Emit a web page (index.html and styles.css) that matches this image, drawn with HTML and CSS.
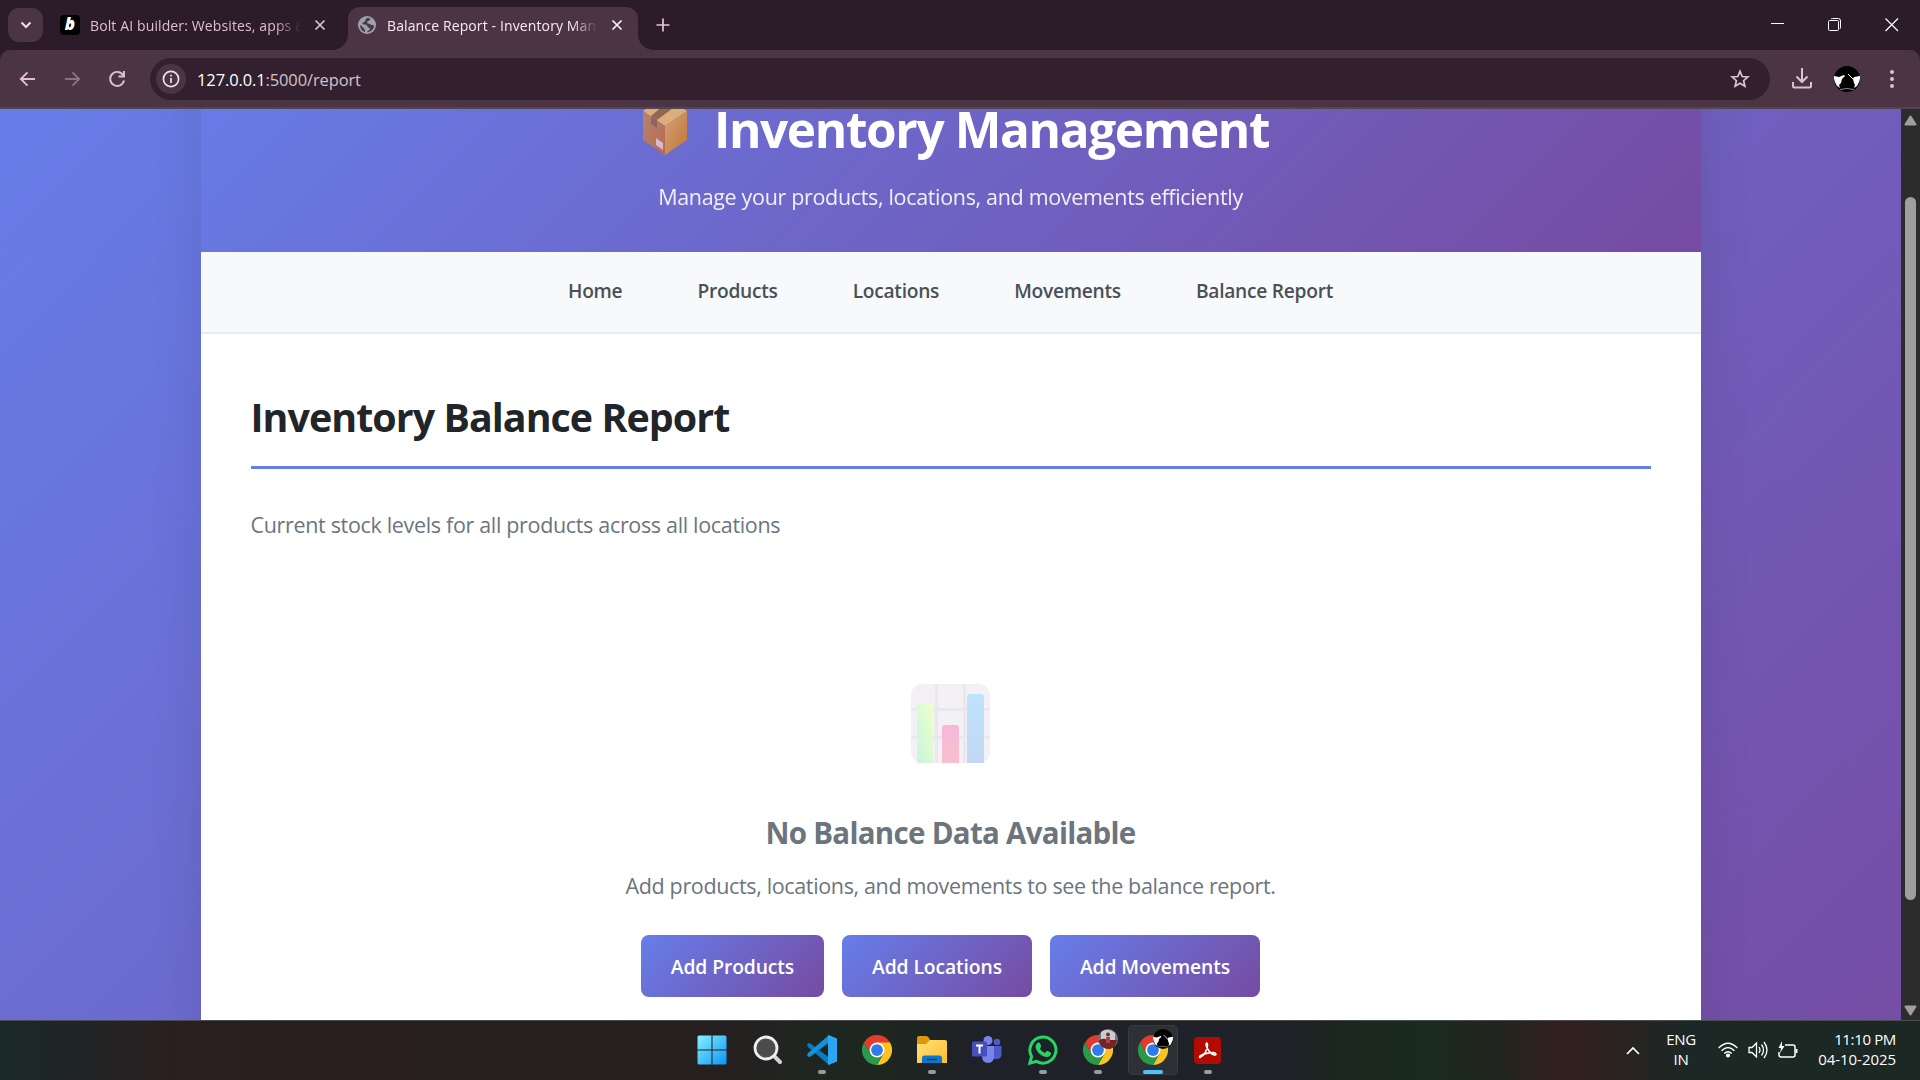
FILE: index.html
```html
<!DOCTYPE html>
<html lang="en">
<head>
<meta charset="utf-8">
<title>Balance Report - Inventory Management</title>
<link rel="stylesheet" href="styles.css">
</head>
<body>
<svg width="0" height="0" class="defs" aria-hidden="true">
  <defs>
    <linearGradient id="win" x1="0" y1="0" x2="1" y2="1"><stop offset="0" stop-color="#84f2ff"/><stop offset="1" stop-color="#0b94f5"/></linearGradient>
    <linearGradient id="folder" x1="0" y1="0" x2="1" y2="1"><stop offset="0" stop-color="#ffe07a"/><stop offset="1" stop-color="#fbc02a"/></linearGradient>
    <linearGradient id="green" x1="1" y1="0" x2="0" y2="1"><stop offset="0" stop-color="#efffcb"/><stop offset="1" stop-color="#c6f5de"/></linearGradient>
    <linearGradient id="pink" x1="0" y1="0" x2="0" y2="1"><stop offset="0" stop-color="#f5b8d8"/><stop offset="1" stop-color="#f8c0cd"/></linearGradient>
    <linearGradient id="blue" x1="0" y1="0" x2="0" y2="1"><stop offset="0" stop-color="#bde4ff"/><stop offset="1" stop-color="#c3d7f1"/></linearGradient>
    <linearGradient id="boxl" x1="0" y1="0" x2="1" y2="1"><stop offset="0" stop-color="#b68370"/><stop offset="1" stop-color="#b76b50"/></linearGradient>
    <linearGradient id="boxr" x1="0" y1="0" x2="1" y2="1"><stop offset="0" stop-color="#d99f78"/><stop offset="1" stop-color="#bd7836"/></linearGradient>
    <symbol id="chrome" viewBox="0 0 48 48">
      <path fill="#e33b2e" d="M24 24 3.2 12A24 24 0 0 1 44.8 12Z"/>
      <path fill="#fcc31e" d="M24 12H44.8A24 24 0 0 1 24 48L34.4 30Z"/>
      <path fill="#2a9a48" d="M34.4 30 24 48A24 24 0 0 1 3.2 12L13.6 30Z"/>
      <path fill="#e33b2e" d="M3.2 12 13.6 30 24 24V12Z"/>
      <circle cx="24" cy="24" r="12" fill="#fff"/><circle cx="24" cy="24" r="9.4" fill="#2f7bea"/>
    </symbol>
    <symbol id="avatar" viewBox="0 0 26 26">
      <circle cx="13" cy="13" r="13" fill="#000"/>
      <path fill="#fff" d="M0 10 5 11 10 9 11 10 8 13 7 17 5 19 6 22 3 20Q-.5 15 0 10ZM26 10 20 11 19 13 20 17 21 19 20 22 23 20Q26.500 15 26 10Z"/>
      <path fill="none" stroke="#aaa" stroke-width=".8" d="M6 23.500Q13 21.500 20 23.500"/>
      <path fill="none" stroke="#fff" stroke-width="1" d="M14 8 20 14"/>
    </symbol>
  </defs>
</svg>

<div class="screen">
  <div class="tabstrip">
    <div class="tab-search"><svg width="12" height="8" viewBox="0 0 12 8"><path d="M1.500 1.500 6 6 10.500 1.500" fill="none" stroke="#f0dfe9" stroke-width="2"/></svg></div>
    <div class="tab tab-idle">
      <span class="bolt">b</span>
      <span class="tab-title">Bolt AI builder: Websites, apps &amp;</span>
      <svg class="tab-close" width="12" height="12" viewBox="0 0 12 12"><path d="m1.500 1.500 9 9m0-9-9 9" stroke="#e2bfd4" stroke-width="1.700"/></svg>
    </div>
    <div class="tab tab-active">
      <svg class="globe" width="18" height="18" viewBox="0 0 18 18"><circle cx="9" cy="9" r="9" fill="#9aa3ad"/><path fill="#4b3544" d="M10 2C7 2.300 8 4 7 5.500 5.500 6.200 4.300 6.500 4.500 8 6 9 9 8 9.500 10.500 10 12 12 11.500 12 13 11.500 14.500 9.500 14.500 9 16.200 13 16 16 13 16 9.500 14.500 8.500 13 9.500 12 8 10.500 7.500 9 7.500 9 6 9.500 4.500 12 5 12.500 3 11.800 2.300 11 2 10 2ZM2 9C2 12.500 4 15 7 16 7.500 14.500 6.500 13.500 6 12.500 5 11.500 4 10 2 9Z"/></svg>
      <span class="tab-title">Balance Report - Inventory Man</span>
      <svg class="tab-close" width="12" height="12" viewBox="0 0 12 12"><path d="m1.500 1.500 9 9m0-9-9 9" stroke="#fff0f8" stroke-width="1.700"/></svg>
    </div>
    <svg class="newtab" width="14" height="14" viewBox="0 0 14 14"><path d="M7 .5v13M.5 7h13" stroke="#e6c6da" stroke-width="1.700"/></svg>
    <div class="winctl">
      <svg width="14" height="14" viewBox="0 0 14 14"><path d="M0 5.500h13" stroke="#fff"/></svg>
      <svg width="14" height="14" viewBox="0 0 14 14" fill="none" stroke="#fff"><rect x=".5" y="2.500" width="10" height="10" rx="1"/><path d="M3 1Q3.500.5 4.500.5h6Q12.500.5 12.500 3v6.500q0 1-.8 1.500"/></svg>
      <svg width="14" height="14" viewBox="0 0 14 14"><path d="m.5.500 12.500 12.500m0-12.500-12.500 12.500" stroke="#fff" stroke-width="1.200"/></svg>
    </div>
  </div>

  <div class="toolbar">
    <svg width="18" height="18" viewBox="0 0 18 18" fill="none" stroke="#e0bfd3" stroke-width="1.900"><path d="M17 9H3M9.500 2.300 2.800 9 9.500 15.700"/></svg>
    <svg width="18" height="18" viewBox="0 0 18 18" fill="none" stroke="#8a7081" stroke-width="1.900"><path d="M2 9h14M9.500 2.300 16.200 9 9.500 15.700"/></svg>
    <svg width="18" height="18" viewBox="0 0 18 18" fill="none" stroke="#e0bfd3" stroke-width="1.900"><path d="M15.300 5.500A7 7 0 1 0 16 10.500M16 1v5.500h-5.500"/></svg>
    <div class="omnibox">
      <span class="siteinfo"><svg width="18" height="18" viewBox="0 0 18 18"><circle cx="9" cy="9" r="7.600" fill="none" stroke="#f0dfe9" stroke-width="1.700"/><path d="M9 8v5M9 4.800v1.700" stroke="#f0dfe9" stroke-width="1.700"/></svg></span>
      <span class="url">127.0.0.1<i>:5000/report</i></span>
      <svg class="star" width="20" height="20" viewBox="0 0 20 20"><path d="m10 2.300 2.200 5.200 5.700.5-4.300 3.700 1.300 5.500-4.900-2.900-4.900 2.900 1.300-5.500L2.100 8l5.700-.5Z" fill="none" stroke="#dcc5d2" stroke-width="1.700"/></svg>
    </div>
    <svg class="download" width="20" height="21" viewBox="0 0 20 21" fill="none" stroke="#e0bfd3" stroke-width="2"><path d="M10 0v13.500M4.500 8.500l5.500 5.500 5.500-5.500M1 14v4q0 1.500 1.500 1.500h15q1.500 0 1.500-1.500v-4"/></svg>
    <svg class="profile" width="26" height="26"><use href="#avatar"/></svg>
    <svg width="4" height="18" viewBox="0 0 4 18" fill="#e0bfd3"><circle cx="2" cy="2" r="2"/><circle cx="2" cy="9" r="2"/><circle cx="2" cy="16" r="2"/></svg>
  </div>

  <div class="viewport">
    <div class="page">
      <div class="container">
        <header class="header">
          <h1><svg width="44" height="58" viewBox="0 0 44 58"><path fill="#dcae7e" d="M22 0 44 14 22 29 0 14Z"/><path fill="url(#boxl)" d="M0 14 22 29V58L0 43Z"/><path fill="url(#boxr)" d="M44 14 22 29V58L44 43Z"/><path fill="#94664f" d="M27 3 34 8 14 23 8 19Z"/><path fill="#8b6560" d="m8 19 6 4v8l-6-4Z"/><path fill="#d8bad2" d="m13 41 7 5v7l-7-5Z"/></svg><span>Inventory Management</span></h1>
          <p>Manage your products, locations, and movements efficiently</p>
        </header>
        <nav class="nav"><a>Home</a><a>Products</a><a>Locations</a><a>Movements</a><a>Balance Report</a></nav>
        <main class="main">
          <h2>Inventory Balance Report</h2>
          <p class="lead">Current stock levels for all products across all locations</p>
          <section class="empty">
            <svg width="79" height="79" viewBox="0 0 79 79"><rect width="79" height="79" rx="11" fill="#f3f1f6"/><path d="M25.500 0v79M53.500 0v79M0 25.500h79M0 53.500h79" stroke="#e9e8ec" stroke-width="3"/><path fill="url(#green)" d="M6 79V22q0-3 3-3h10q3 0 3 3v57Z"/><path fill="url(#pink)" d="M31 79V44q0-3 3-3h11q3 0 3 3v35Z"/><path fill="url(#blue)" d="M56 79V13q0-3 3-3h11q3 0 3 3v66Z"/></svg>
            <h3>No Balance Data Available</h3>
            <p>Add products, locations, and movements to see the balance report.</p>
            <div class="actions"><a class="btn b1">Add Products</a><a class="btn b2">Add Locations</a><a class="btn b3">Add Movements</a></div>
          </section>
        </main>
      </div>
    </div>
    <div class="scrollbar">
      <svg width="13" height="11" viewBox="0 0 13 11"><path d="M6.500 1.500 11.500 9.500H1.500Z" fill="#9f9f9f" stroke="#9f9f9f" stroke-width="2" stroke-linejoin="round"/></svg>
      <div class="thumb"></div>
      <svg width="13" height="11" viewBox="0 0 13 11"><path d="M6.500 9.500 11.500 1.500H1.500Z" fill="#9f9f9f" stroke="#9f9f9f" stroke-width="2" stroke-linejoin="round"/></svg>
    </div>
  </div>

  <div class="taskbar">
    <div class="side start"></div>
    <div class="apps">
      <div class="app"><svg width="30" height="30" viewBox="0 0 30 30"><path fill="url(#win)" d="M2 .5h12.500v14H.5V2Q.5.5 2 .5ZM15.500.5H28q1.500 0 1.500 1.500v12.500h-14ZM.5 15.500h14v14H2Q.5 29.500.5 28ZM15.500 15.500h14V28q0 1.500-1.500 1.500H15.500Z"/></svg></div>
      <div class="app"><svg width="30" height="30" viewBox="0 0 30 30"><path d="m22 21 6 6" stroke="#cfd2d8" stroke-width="4" stroke-linecap="round"/><circle cx="14" cy="13" r="11" fill="#4c4c4c" stroke="#eeeef0" stroke-width="2.800"/></svg></div>
      <div class="app run"><svg width="30" height="30" viewBox="0 0 30 30"><path fill="#0a7bc4" d="M0 9.500 2.500 7.800 22 22.500V30L1 12Z"/><path fill="#1490dd" d="M0 20.500 2.500 22.200 22 7.500V0L1 18Z"/><path fill="#2ba7f2" d="M21.500 0 30 3.500v23L21.500 30 21 29V1Z"/></svg></div>
      <div class="app"><svg width="30" height="30"><use href="#chrome"/></svg></div>
      <div class="app run"><svg width="30" height="28" viewBox="0 0 30 28"><path fill="#dd9a08" d="M0 2Q0 0 2 0h7q2 0 3 2l1 2v6H0Z"/><path fill="url(#folder)" d="M0 8h9l4-4h15q2 0 2 2v21H0Z"/><path fill="#1077c8" d="M5 27v-5q0-2.500 2.500-2.500h15Q25 19.500 25 22v5Z"/><path d="M10 23.500h10" stroke="#06437d" stroke-width="1.500"/></svg></div>
      <div class="app"><svg width="30" height="28" viewBox="0 0 30 28"><circle cx="25" cy="6" r="3.300" fill="#5059c9"/><path fill="#5059c9" d="M20 10h9.500v8q0 5-5 5H20Z"/><circle cx="16" cy="4.500" r="4.500" fill="#7b83eb"/><path fill="#7b83eb" d="M10 10h12v10q0 7-6 7t-6-7Z"/><rect y="5.500" width="15" height="15" rx="1.500" fill="#4650bd"/><path d="M4 9.500h7M7.500 9.500v8" stroke="#fff" stroke-width="2"/></svg></div>
      <div class="app run"><svg width="30" height="30" viewBox="0 0 30 30"><path d="M1.800 28.200 3.600 21.500A13 13 0 1 1 8.500 26.400Z" fill="none" stroke="#28d366" stroke-width="3"/><path fill="#28d366" d="M9.500 8q1.500-1 2.500.2l1.200 3q0 1-1.400 2.200 1.800 3.200 5 4.700l1.500-1.700q.7-.7 1.400-.3l3 1.500q.8.500 0 2.200-1.500 2.700-4.700 2.200Q11 20.500 8 14 6.800 10 9.500 8Z"/></svg></div>
      <div class="app run"><svg width="30" height="30"><use href="#chrome"/></svg><svg class="badge" width="20" height="20" viewBox="0 0 20 20"><circle cx="10" cy="10" r="10" fill="#77747a"/><path fill="#cfcacb" d="M3 3Q10-2 17 4V11H3Z"/><path fill="#742326" d="M.5 12Q5 8 9 11l10 0Q18 18 12 20 3 20 .5 12Z"/><path fill="#b0433f" d="M8 8h4v6H8Z"/><circle cx="10" cy="5.500" r="2" fill="#5d3937"/></svg></div>
      <div class="app run active"><svg width="30" height="30"><use href="#chrome"/></svg><svg class="badge" width="20" height="20"><use href="#avatar"/></svg></div>
      <div class="app run"><svg width="27" height="27" viewBox="0 0 27 27"><rect width="27" height="27" rx="4" fill="#b30b00"/><path d="M6 20C10 19 14 12 13.500 7.500 13.300 5 11.500 6 12.200 8.500 13.500 13 17 17.500 20.500 18 23 18 22 15.500 19 15.600 14 15.800 9 17 6.500 18.700 4.500 20.500 6 21 7 19.500" fill="none" stroke="#fff" stroke-width="1.600"/></svg></div>
    </div>
    <div class="side tray">
      <svg class="up" width="14" height="9" viewBox="0 0 14 9"><path d="m1 8 6-6 6 6" fill="none" stroke="#fff" stroke-width="1.700"/></svg>
      <div class="lang"><span>ENG</span><span>IN</span></div>
      <div class="status">
        <svg width="20" height="16" viewBox="0 0 20 16" fill="none" stroke="#fff" stroke-width="1.400"><path d="M.7 6Q10-3.500 19.300 6M3.500 8.800q6.500-6.600 13 0M6.300 11.500q3.700-3.700 7.400 0"/><circle cx="10" cy="13.500" r="1.400" fill="#fff"/></svg>
        <svg width="20" height="18" viewBox="0 0 20 18" fill="none" stroke="#fff" stroke-width="1.300"><path d="M1 6.500h3L8.500 2v14L4 11.500H1Z"/><path d="M11 6q2 3 0 6M13.500 3.500q4 5.500 0 11M16 1q6 8 0 16"/></svg>
        <svg width="20" height="18" viewBox="0 0 20 18" fill="none" stroke="#fff" stroke-width="1.500"><path d="M7 4h8q2 0 2 2v8q0 2-2 2H3q-2 0-2-2v-3"/><path d="M18.500 8v4" stroke-width="2"/><path d="M4 0 .5 7H3L2 12 6.500 5H4Z" fill="#fff" stroke="none"/></svg>
      </div>
      <div class="clock"><span class="time">11:10 PM</span><span class="date">04-10-2025</span></div>
    </div>
  </div>
</div>
</body>
</html>
```
FILE: styles.css
```css
* { box-sizing: border-box; margin: 0; padding: 0; }
body { width: 1920px; height: 1080px; overflow: hidden; font-family: "Open Sans", "Noto Sans", sans-serif; }
svg { display: block; flex: none; }
.defs { position: absolute; }
.screen { display: flex; flex-direction: column; width: 1920px; height: 1080px; background: #2c1b29; }

/* Browser tab strip */
.tabstrip { display: flex; height: 50px; flex: none; background: #2c1b29; }
.tab-search { display: flex; align-items: center; justify-content: center; width: 35px; height: 34px; margin: 8px 0 0 8px; border-radius: 11px; background: #4b3544; }
.tab { display: flex; align-items: center; height: 43px; margin-top: 7px; padding-bottom: 7px; }
.tab-idle { width: 305px; padding-left: 17px; color: #e0bfd3; }
.tab-active { position: relative; width: 290px; padding-left: 10px; border-radius: 12px 12px 0 0; background: #4b3544; color: #fbe9f3; }
.tab-active::before, .tab-active::after { content: ""; position: absolute; bottom: 0; width: 15px; height: 15px; }
.tab-active::before { left: -15px; background: radial-gradient(circle at 0 0, transparent 14.500px, #4b3544 15px); }
.tab-active::after { right: -15px; background: radial-gradient(circle at 100% 0, transparent 14.500px, #4b3544 15px); }
.tab-title { width: 211px; padding-top: 2px; white-space: nowrap; font-size: 14px; line-height: 24px; letter-spacing: 0.120px; -webkit-mask-image: linear-gradient(90deg, #000 185px, transparent 211px); mask-image: linear-gradient(90deg, #000 185px, transparent 211px); }
.tab-idle .tab-title { margin-left: 10px; }
.tab-idle .tab-close { margin-left: 13px; }
.tab-active .tab-title { margin-left: 11px; }
.tab-active .tab-close { margin-left: 13px; }
.bolt { width: 20px; height: 20px; border-radius: 4px; background: #000; color: #fff; font: italic 800 17px/18px "Open Sans", sans-serif; text-align: center; }
.newtab { margin: 18px 0 0 18px; }
.winctl { display: flex; gap: 43px; margin: 18px 21px 0 auto; }

/* Address bar */
.toolbar { display: flex; align-items: center; height: 59px; flex: none; padding: 0 26px 0 18px; border-bottom: 2px solid #514650; border-radius: 10px 10px 0 0; background: #4b3544; }
.toolbar > svg + svg { margin-left: 27px; }
.omnibox { display: flex; align-items: center; width: 1620px; height: 42px; margin: 0 0 0 24px; padding: 0 20px 0 6px; border-radius: 21px; background: #33202e; }
.siteinfo { display: flex; align-items: center; justify-content: center; width: 30px; height: 30px; border-radius: 50%; background: #4b3544; }
.url { margin-left: 11px; padding-top: 1px; font-size: 16.500px; letter-spacing: -0.120px; color: #fff; }
.url i { font-style: normal; color: #d3c2cc; }
.star { margin-left: auto; }
.download { margin-left: 22px; }
.toolbar > svg.profile { margin-left: 22px; }
.toolbar > svg.profile + svg { margin-left: 30px; }

/* Web page */
.viewport { display: flex; flex: 1; min-height: 0; overflow: hidden; }
.page { width: 1901px; height: 1135px; margin-top: -91px; background: linear-gradient(135deg, #667eea 0%, #764ba2 100%); }
.container { width: 1500px; height: 1100px; margin: 0 auto; background: #fff; box-shadow: 0 0 50px rgba(0, 0, 0, 0.1); }
.header { height: 234px; padding-top: 81px; background: linear-gradient(135deg, #667eea 0%, #764ba2 100%); color: #fff; text-align: center; }
.header h1 { display: flex; align-items: center; justify-content: center; gap: 27px; height: 60px; padding-left: 11px; font-size: 49.500px; line-height: 60px; letter-spacing: -1.370px; }
.header h1 svg { margin-top: -6px; }
.header p { margin-top: 20px; font-size: 21.500px; line-height: 36px; letter-spacing: -0.330px; opacity: 0.9; }
.nav { display: flex; align-items: center; justify-content: center; gap: 75px; height: 82px; padding-bottom: 4px; border-bottom: 2px solid #e9ecef; background: #f8f9fa; color: #495057; font-size: 19.200px; font-weight: 600; letter-spacing: -0.270px; }
.main { padding: 52px 50px 0; }
.main h2 { height: 83px; padding-top: 1px; border-bottom: 3px solid #667eea; color: #212529; font-size: 39.400px; line-height: 60px; letter-spacing: -0.960px; }
.lead { margin-top: 38px; color: #6c757d; font-size: 21.500px; line-height: 36px; letter-spacing: -0.330px; }
.empty { display: flex; flex-direction: column; align-items: center; margin-top: 141px; color: #6c757d; }
.empty h3 { margin-top: 50px; font-size: 29.500px; line-height: 40px; letter-spacing: -0.710px; }
.empty p { margin-top: 15px; font-size: 21.500px; line-height: 36px; letter-spacing: -0.350px; }
.actions { display: flex; gap: 18px; margin-top: 31px; }
.btn { height: 62px; padding-top: 1px; border-radius: 8px; background: linear-gradient(135deg, #667eea 0%, #764ba2 100%); color: #fff; font-size: 19.300px; font-weight: 600; line-height: 62px; letter-spacing: -0.100px; text-align: center; }
.b1 { width: 183px; }
.b2 { width: 190px; }
.b3 { width: 210px; }
.scrollbar { display: flex; flex-direction: column; align-items: center; width: 19px; padding-top: 6px; background: #2c2c2c; }
.thumb { width: 11px; height: 703px; margin: 71px 0 105px; border-radius: 6px; background: #9f9f9f; }

/* Taskbar */
.taskbar { display: flex; align-items: center; height: 60px; flex: none; padding-bottom: 1px; border-top: 1px solid #494c4b; background: linear-gradient(90deg, #1b2a27 0, #222425 90px, #2b1f20 180px, #261f20 720px, #1f2620 810px, #1e2620 890px, #1e2127 970px, #1f2227 1290px, #1b281f 1350px, #1b2b1e 1430px, #22251f 1500px, #33201f 1560px, #2a2321 1620px, #1b2825 1690px, #1b2823 1920px); color: #fff; }
.side { flex: 1; }
.start { flex: none; width: 687px; }
.apps { display: flex; gap: 5.100px; }
.app { position: relative; display: flex; align-items: center; justify-content: center; width: 50px; height: 50px; border-radius: 5px; }
.active { background: #2d3035; box-shadow: inset 0 0 0 1px #373a3e; }
.run::after { content: ""; position: absolute; bottom: 1px; width: 8px; height: 4px; border-radius: 2px; background: #9a9b9d; }
.active::after { width: 20px; background: #4cc2ff; }
.badge { position: absolute; left: 25px; top: 4px; }
.tray { display: flex; align-items: center; justify-content: flex-end; padding-right: 24px; font-size: 15px; line-height: 20px; }
.lang { display: flex; flex-direction: column; align-items: center; width: 30px; margin-left: 26px; letter-spacing: -0.300px; }
.status { display: flex; align-items: center; gap: 10px; margin-left: 22px; }
.lang, .clock { margin-top: -2px; }
.clock { display: flex; flex-direction: column; align-items: flex-end; width: 80px; margin-left: 18px; white-space: nowrap; }
.time { letter-spacing: -0.350px; }
.date { letter-spacing: -0.050px; }
```
